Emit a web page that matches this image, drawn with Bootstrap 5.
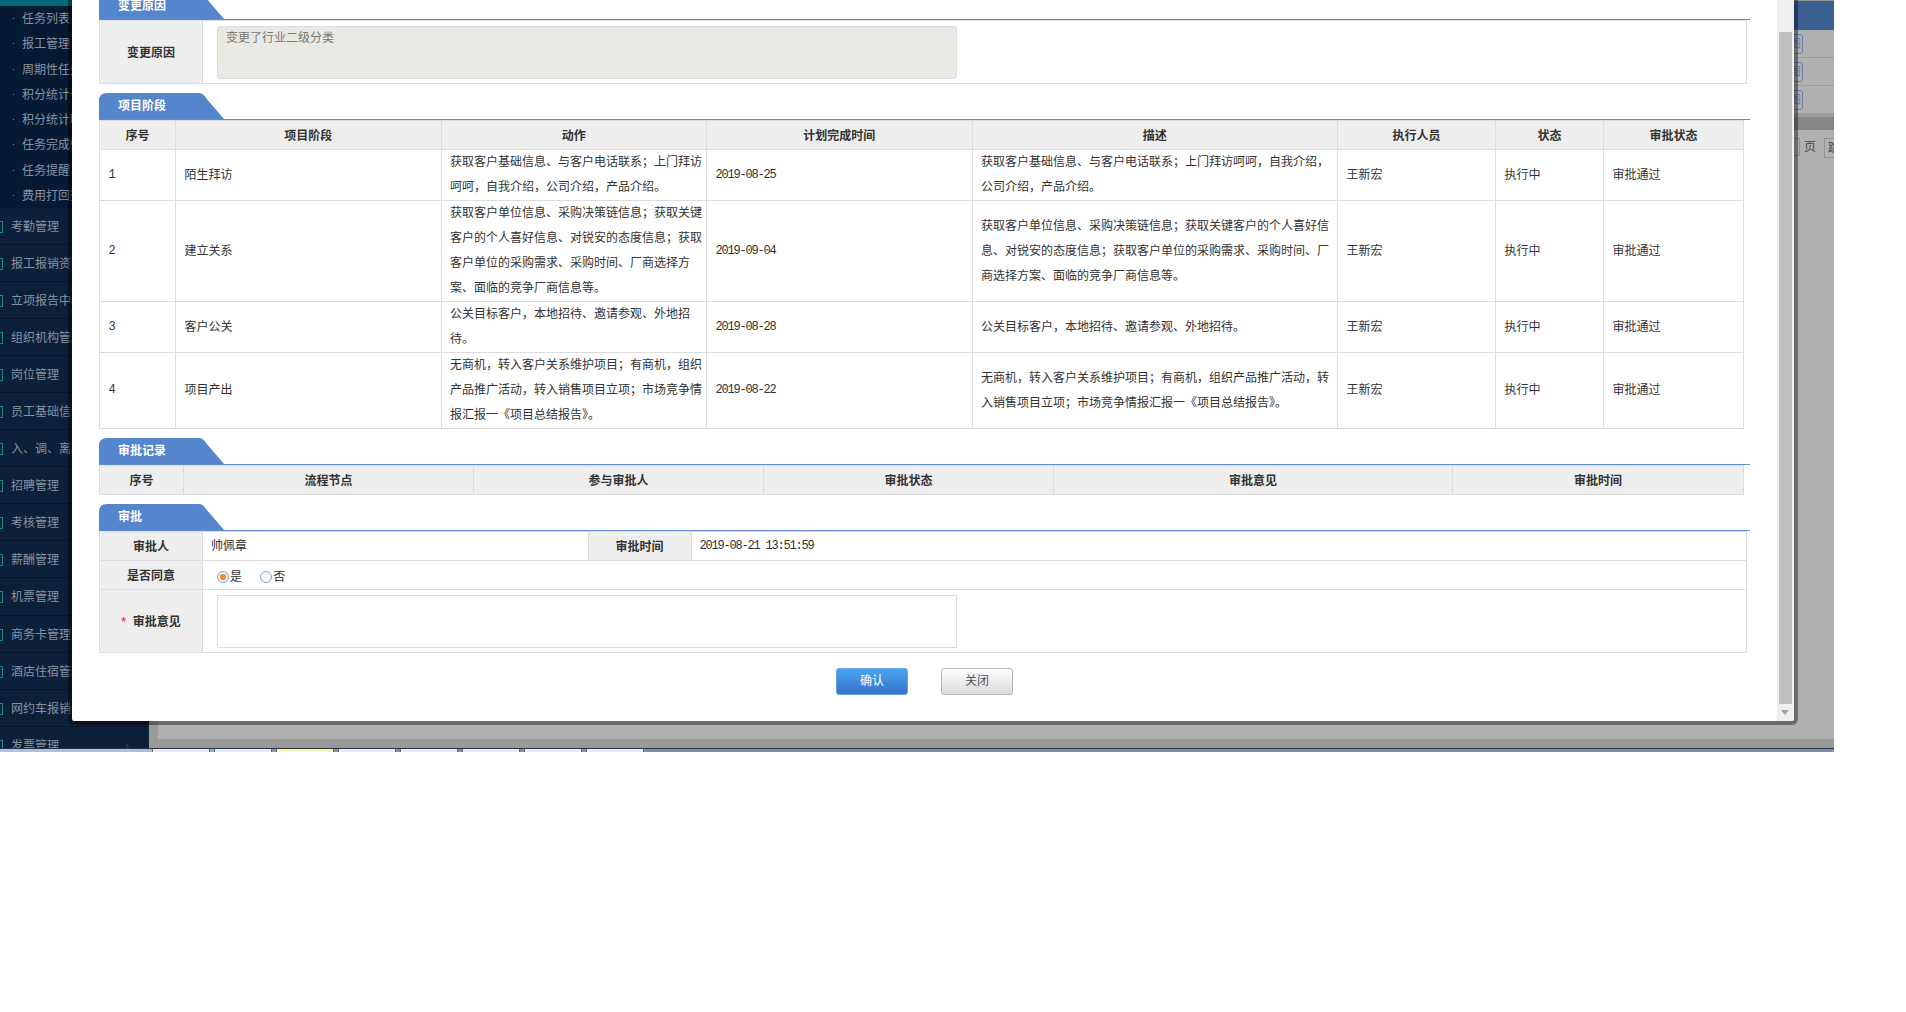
<!DOCTYPE html>
<html lang="zh-CN">
<head>
<meta charset="UTF-8">
<meta name="viewport" content="width=device-width, initial-scale=1.0">
<title>项目阶段审批</title>
<link href="https://cdn.jsdelivr.net/npm/bootstrap@5.3.3/dist/css/bootstrap.min.css" rel="stylesheet">
<script src="https://cdn.jsdelivr.net/npm/bootstrap@5.3.3/dist/js/bootstrap.bundle.min.js"></script>
<style>
body { background: #fff; font: 12px/1.5 "Liberation Sans", "Noto Sans CJK SC", sans-serif; color: #333; overflow: hidden; }
.desk { width: 1834px; height: 752px; overflow: hidden; }
.work { height: 748px; }
.taskbar { height: 4px; border-top: 1px solid #2c3444; background: linear-gradient(90deg, #a9c4e2 0, #a9c4e2 120px, #7d90a8 300px, #7d90a8 100%); }
.task-tab { width: 58px; background: #e6edf6; border-left: 1px solid #5a6a80; border-right: 1px solid #5a6a80; }
.task-tab.on { background: #fbf6a8; }
.task-tabs { gap: 4px; margin-left: 152px; height: 3px; }

/* left menu */
.side { width: 149px; background: #0c2039; color: #8592a3; flex: none; overflow: hidden; }
.side-top { height: 6px; background: #00697b; }
.sub-menu { background: #071a33; }
.sub-item { height: 25.25px; line-height: 27px; padding-left: 22px; white-space: nowrap; position: relative; }
.sub-item::before { content: ""; position: absolute; left: 13px; top: 12px; width: 1px; height: 1px; background: #8592a3; }
.main-item { height: 37.05px; padding-top: 2px; border-bottom: 1px solid #07162b; gap: 8px; white-space: nowrap; font-size: 12px; }
.menu-ico { width: 3px; height: 12px; border: 1px solid #158a8c; border-left: 0; flex: none; }
.menu-arrow { margin-left: auto; margin-right: 20px; color: #3c4c62; }

/* page behind the dialog */
.behind { background: #999; min-width: 0; }
.bar-top { height: 29px; margin-top: 1px; background: #3a5f92; flex: none; }
.line-row { height: 28px; background: #b0b0b0; border-bottom: 1px solid #9c9c9c; padding: 4px 31px 0 0; flex: none; }
.line-btn { width: 24px; height: 20px; border: 1px solid #6c80ab; border-radius: 3px; color: #6c80ab; line-height: 18px; text-align: right; padding-right: 1px; }
.band { height: 13px; margin-top: 3px; background: #868686; flex: none; }
.pager-area { background: #b0b0b0; margin-left: 9px; margin-bottom: 9px; padding: 8px 0 0 0; gap: 4px; color: #444; white-space: nowrap; }
.pager-box { width: 40px; height: 18px; border: 1px solid #909090; margin-left: auto; }
.pager-go { width: 30px; height: 20px; border: 1px solid #909090; line-height: 18px; padding-left: 3px; margin-right: -20px; margin-left: 4px; }

/* dialog */
.dlg { position: absolute; left: 68px; top: 0; width: 1730px; height: 725px; border: 4px solid rgba(0,0,0,.39); border-top: 0; border-radius: 0 0 6px 6px; background: #fff; background-clip: padding-box; }
.dlg-body { padding: 0 27px; margin-top: -7px; min-width: 0; }
.dlg-bar { width: 17px; background: #f0f0f0; flex: none; }
.bar-gap { height: 32px; }
.bar-thumb { width: 13px; margin-left: 2px; background: #bfbfbf; height: 672px; }
.bar-arrow { width: 0; height: 0; margin: 6px 0 0 4px; border: 4px solid transparent; border-top: 5px solid #a0a0a0; border-bottom: 0; }

.sec-head { border-bottom: 1px solid #5f8dd0; }
.sec-tab { width: 125px; height: 26px; background: #5585cc; color: #fff; font-weight: 700; line-height: 27px; padding-left: 19px; clip-path: path('M0 26V8Q0 0 8 0H100Q104 0 107 5L125 26Z'); }
.sec-gap { margin-top: 9px; }

.sheet.table { --bs-table-border-color: #ddd; --bs-table-color: #333; --bs-table-bg: #fff; margin: 0; table-layout: fixed; }
.sheet.table>:not(caption)>*>* { padding: 0 4px 0 8.5px; line-height: 25px; vertical-align: middle; font-size: 12px; box-shadow: none; }
.sheet.table>:not(caption)>*>th { background: #eee; font-weight: 700; text-align: center; height: 29px; line-height: 20px; padding: 2px 4px 0; }
.sheet.wide-c>:not(caption)>*>td { padding-left: 8px; }
.wide-a { width: 1643px; }
.wide-b { width: 1645px; }
.wide-c { width: 1648px; }
.c-no { width: 76px; } .c-wide { width: 265.5px; } .c-desc { width: 365.5px; } .c-man { width: 158px; } .c-st { width: 108px; } .c-ok { width: 140px; }
.d-no { width: 84px; } .d-col { width: 290px; } .d-say { width: 399px; }
.f-lab { width: 103px; } .f-val { width: 385.5px; }

.num { font-family: "Liberation Mono", monospace; letter-spacing: -1.2px; }
.sheet.table>:not(caption)>*>td.box-cell { padding: 5px 0 4px 14px; line-height: 0; }
.memo.form-control { width: 740px; height: 53px; min-height: 0; padding: 2px 8px; font-size: 12px; line-height: 18px; border: 1px solid #ddd; border-radius: 3px; resize: none; box-shadow: none; color: #777; }
.memo.form-control:disabled, .memo.form-control[readonly] { background: #e9e9e3; }
.memo.blank { border-radius: 0; }
.star { color: #e8505b; margin-right: 7px; }
.sheet.table>:not(caption)>*>td.pick { padding-left: 14px; padding-top: 3px; line-height: 24px; }
.pick-dot { appearance: none; width: 12px; height: 12px; border: 1px solid #7ba6d8; border-radius: 50%; background: #f4f8fc; vertical-align: -2px; margin: 0; }
.pick-dot:checked { background: radial-gradient(circle, #f7922a 0 3px, #eef3f9 3.5px); }
.pick-lab { margin-right: 15px; margin-left: 1px; }

.foot-btns { gap: 33px; margin-top: 15px; }
.foot-btns .btn { width: 72px; height: 27px; padding: 0; font-size: 12px; line-height: 25px; border-radius: 3px; }
.btn-ok, .btn-ok:hover { background: linear-gradient(#46a5f0, #3a72c8); border: 1px solid #69a4e8; color: #fff; }
.btn-off, .btn-off:hover { background: linear-gradient(#fff, #dadada); border: 1px solid #b5b5b5; color: #555; }
</style>
</head>
<body>
<div class="desk position-relative">
  <div class="work d-flex">
    <div class="side">
      <div class="side-top"></div>
      <div class="sub-menu">
        <div class="sub-item">任务列表</div>
        <div class="sub-item">报工管理</div>
        <div class="sub-item">周期性任务管理</div>
        <div class="sub-item">积分统计一览</div>
        <div class="sub-item">积分统计明细</div>
        <div class="sub-item">任务完成情况</div>
        <div class="sub-item">任务提醒</div>
        <div class="sub-item">费用打回查询</div>
      </div>
      <div class="main-item d-flex align-items-center"><span class="menu-ico"></span>考勤管理</div>
      <div class="main-item d-flex align-items-center"><span class="menu-ico"></span>报工报销资料</div>
      <div class="main-item d-flex align-items-center"><span class="menu-ico"></span>立项报告中心</div>
      <div class="main-item d-flex align-items-center"><span class="menu-ico"></span>组织机构管理</div>
      <div class="main-item d-flex align-items-center"><span class="menu-ico"></span>岗位管理</div>
      <div class="main-item d-flex align-items-center"><span class="menu-ico"></span>员工基础信息</div>
      <div class="main-item d-flex align-items-center"><span class="menu-ico"></span>入、调、离职管理</div>
      <div class="main-item d-flex align-items-center"><span class="menu-ico"></span>招聘管理</div>
      <div class="main-item d-flex align-items-center"><span class="menu-ico"></span>考核管理</div>
      <div class="main-item d-flex align-items-center"><span class="menu-ico"></span>薪酬管理</div>
      <div class="main-item d-flex align-items-center"><span class="menu-ico"></span>机票管理</div>
      <div class="main-item d-flex align-items-center"><span class="menu-ico"></span>商务卡管理</div>
      <div class="main-item d-flex align-items-center"><span class="menu-ico"></span>酒店住宿管理</div>
      <div class="main-item d-flex align-items-center"><span class="menu-ico"></span>网约车报销</div>
      <div class="main-item d-flex align-items-center"><span class="menu-ico"></span>发票管理<span class="menu-arrow">›</span></div>
    </div>
    <div class="behind flex-grow-1 d-flex flex-column">
      <div class="bar-top"></div>
      <div class="line-row d-flex justify-content-end"><div class="line-btn">图</div></div>
      <div class="line-row d-flex justify-content-end"><div class="line-btn">图</div></div>
      <div class="line-row d-flex justify-content-end"><div class="line-btn">图</div></div>
      <div class="band"></div>
      <div class="pager-area flex-grow-1 d-flex align-items-start">
        <span class="pager-box"></span><span>页</span><span class="pager-go">跳转</span>
      </div>
    </div>
  </div>
  <div class="taskbar">
    <div class="task-tabs d-flex">
      <span class="task-tab"></span><span class="task-tab"></span><span class="task-tab on"></span><span class="task-tab"></span><span class="task-tab"></span><span class="task-tab"></span><span class="task-tab"></span><span class="task-tab"></span>
    </div>
  </div>

  <div class="dlg d-flex overflow-hidden">
    <div class="dlg-body flex-grow-1">
      <div class="sec-head"><div class="sec-tab">变更原因</div></div>
      <table class="table table-bordered sheet wide-c">
        <colgroup><col class="f-lab"><col></colgroup>
        <tbody>
          <tr><th>变更原因</th><td class="box-cell"><textarea class="form-control memo" readonly>变更了行业二级分类</textarea></td></tr>
        </tbody>
      </table>

      <div class="sec-head sec-gap"><div class="sec-tab">项目阶段</div></div>
      <table class="table table-bordered sheet wide-a">
        <colgroup><col class="c-no"><col class="c-wide"><col class="c-wide"><col class="c-wide"><col class="c-desc"><col class="c-man"><col class="c-st"><col class="c-ok"></colgroup>
        <thead>
          <tr><th>序号</th><th>项目阶段</th><th>动作</th><th>计划完成时间</th><th>描述</th><th>执行人员</th><th>状态</th><th>审批状态</th></tr>
        </thead>
        <tbody>
          <tr><td class="num">1</td><td>陌生拜访</td><td>获取客户基础信息、与客户电话联系；上门拜访呵呵，自我介绍，公司介绍，产品介绍。</td><td class="num">2019-08-25</td><td>获取客户基础信息、与客户电话联系；上门拜访呵呵，自我介绍，公司介绍，产品介绍。</td><td>王新宏</td><td>执行中</td><td>审批通过</td></tr>
          <tr><td class="num">2</td><td>建立关系</td><td>获取客户单位信息、采购决策链信息；获取关键客户的个人喜好信息、对锐安的态度信息；获取客户单位的采购需求、采购时间、厂商选择方案、面临的竞争厂商信息等。</td><td class="num">2019-09-04</td><td>获取客户单位信息、采购决策链信息；获取关键客户的个人喜好信息、对锐安的态度信息；获取客户单位的采购需求、采购时间、厂商选择方案、面临的竞争厂商信息等。</td><td>王新宏</td><td>执行中</td><td>审批通过</td></tr>
          <tr><td class="num">3</td><td>客户公关</td><td>公关目标客户，本地招待、邀请参观、外地招待。</td><td class="num">2019-08-28</td><td>公关目标客户，本地招待、邀请参观、外地招待。</td><td>王新宏</td><td>执行中</td><td>审批通过</td></tr>
          <tr><td class="num">4</td><td>项目产出</td><td>无商机，转入客户关系维护项目；有商机，组织产品推广活动，转入销售项目立项；市场竞争情报汇报一《项目总结报告》。</td><td class="num">2019-08-22</td><td>无商机，转入客户关系维护项目；有商机，组织产品推广活动，转入销售项目立项；市场竞争情报汇报一《项目总结报告》。</td><td>王新宏</td><td>执行中</td><td>审批通过</td></tr>
        </tbody>
      </table>

      <div class="sec-head sec-gap"><div class="sec-tab">审批记录</div></div>
      <table class="table table-bordered sheet wide-b">
        <colgroup><col class="d-no"><col class="d-col"><col class="d-col"><col class="d-col"><col class="d-say"><col></colgroup>
        <thead>
          <tr><th>序号</th><th>流程节点</th><th>参与审批人</th><th>审批状态</th><th>审批意见</th><th>审批时间</th></tr>
        </thead>
      </table>

      <div class="sec-head sec-gap"><div class="sec-tab">审批</div></div>
      <table class="table table-bordered sheet wide-c">
        <colgroup><col class="f-lab"><col class="f-val"><col class="f-lab"><col></colgroup>
        <tbody>
          <tr><th>审批人</th><td>帅佩章</td><th>审批时间</th><td class="num">2019-08-21 13:51:59</td></tr>
          <tr><th>是否同意</th><td colspan="3" class="pick"><input type="radio" class="pick-dot" name="agree" checked><span class="pick-lab">是</span> <input type="radio" class="pick-dot" name="agree"><span class="pick-lab">否</span></td></tr>
          <tr><th><span class="star">*</span>审批意见</th><td colspan="3" class="box-cell"><textarea class="form-control memo blank"></textarea></td></tr>
        </tbody>
      </table>

      <div class="foot-btns d-flex justify-content-center">
        <button type="button" class="btn btn-ok">确认</button>
        <button type="button" class="btn btn-off">关闭</button>
      </div>
    </div>
    <div class="dlg-bar d-flex flex-column">
      <div class="bar-gap"></div>
      <div class="bar-thumb"></div>
      <div class="bar-arrow"></div>
    </div>
  </div>
</div>
</body>
</html>
